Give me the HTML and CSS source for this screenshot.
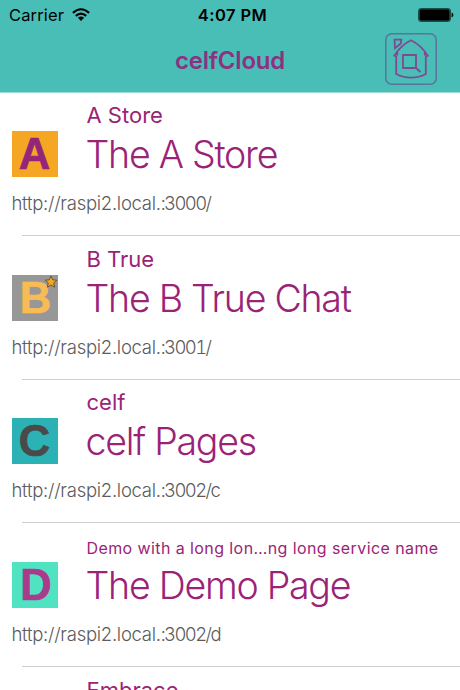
FILE: index.html
```html
<!DOCTYPE html>
<html lang="en">
<head>
<meta charset="utf-8">
<title>celfCloud</title>
<link rel="stylesheet" href="styles.css">
</head>
<body>
<div class="screen">
  <header class="header">
    <div class="status">
      <div class="carrier"><span>Carrier</span>
        <svg class="wifi" width="18" height="14" viewBox="0 0 18 14" fill="none" stroke="#000" stroke-width="2.1"><path d="M.9 4.9Q9-2.4 17.1 4.9M3.8 7.9Q9 3.2 14.2 7.9"/><path d="M5.9 9.8Q9 7.2 12.1 9.8L9 13z" fill="#000" stroke="none"/></svg>
      </div>
      <time class="clock">4:07 PM</time>
      <svg class="battery" width="36" height="14" viewBox="0 0 36 14"><rect x=".5" y=".5" width="32" height="13" rx="2.2" fill="none" stroke="#15403d" stroke-width=".9"/><rect x="1.3" y="1.3" width="30.4" height="11.4" rx="1.4"/><path d="M33.6 4.6q1.8.7 1.8 2.4t-1.8 2.4z"/></svg>
    </div>
    <nav class="navbar">
      <h1 class="heading">celfCloud</h1>
      <button class="home" aria-label="Home">
        <svg width="52" height="52" viewBox="0 0 52 52" fill="none" stroke="#804a91" stroke-width="1.8"><rect x=".8" y=".8" width="50.4" height="50.4" rx="6" stroke="#5d729c" stroke-width="1.5"/><path d="M9.3 22.7Q16 12 26 7.2Q36 12 42.8 22.7L40.8 23.5V41Q34 44.7 26 44.7T11.2 41V23.5z M12.3 22.4V18 M39.8 22.4V18M18 22h13v13H18zM31 35l4.5 4M9.5 6.7h6.8l-.5 3.8-5.8 4.7z"/></svg>
      </button>
    </nav>
  </header>
  <main class="list">
    <article class="row">
      <p class="name">A Store</p>
      <div class="tile tile-a">A</div>
      <h2 class="title">The A Store</h2>
      <p class="url">http://raspi2.local.<span class="port">:3000/</span></p>
    </article>
    <article class="row">
      <p class="name">B True</p>
      <div class="tile tile-b">B<svg class="star" width="14" height="14" viewBox="0 0 14 14"><path d="M7 1l1.7 3.8 4.2.4-3.2 2.8 1 4.2L7 10l-3.7 2.2 1-4.2L1.1 5.2l4.2-.4z" fill="#f6a624" stroke="#60512f" stroke-width=".9"/></svg></div>
      <h2 class="title">The B True Chat</h2>
      <p class="url">http://raspi2.local.<span class="port">:3001/</span></p>
    </article>
    <article class="row">
      <p class="name">celf</p>
      <div class="tile tile-c">C</div>
      <h2 class="title">celf Pages</h2>
      <p class="url">http://raspi2.local.<span class="port">:3002/c</span></p>
    </article>
    <article class="row">
      <p class="name name-long">Demo with a long lon…ng long service name</p>
      <div class="tile tile-d">D</div>
      <h2 class="title">The Demo Page</h2>
      <p class="url">http://raspi2.local.<span class="port">:3002/d</span></p>
    </article>
    <article class="row">
      <p class="name">Embrace</p>
    </article>
  </main>
</div>
</body>
</html>
```
FILE: styles.css
```css
* { box-sizing: border-box; }
body, h1, h2, p { margin: 0; font-weight: inherit; }
body { background: #fff; font-family: Inter, "Liberation Sans", sans-serif; overflow: hidden; }
.screen { width: 460px; height: 690px; overflow: hidden; }
.header { height: 93px; margin-bottom: -1px; background: #49beb7; border-bottom: 1px solid #9fdad6; }
.status {
  display: grid; grid-template-columns: 1fr auto 1fr; align-items: center;
  height: 30px; padding: 0 6px 0 9px; color: #000; font-size: 16.5px;
}
.carrier { display: flex; align-items: center; gap: 8px; letter-spacing: .15px; }
.clock { padding-left: 2px; font-weight: 600; letter-spacing: .45px; }
.battery { justify-self: end; }
.navbar { display: grid; grid-template-columns: 1fr auto 1fr; height: 62px; padding: 0 23px; align-items: center; }
.heading { grid-column: 2; font-size: 24px; line-height: 30px; font-weight: 600; color: #8e3181; letter-spacing: -.2px; }
.home { justify-self: end; width: 52px; height: 52px; margin-bottom: 4px; padding: 0; border: 0; background: none; }
.home svg { display: block; }
.row {
  position: relative; display: grid;
  grid-template-columns: 75px 1fr; grid-template-rows: 38.8px 46px 1fr;
  height: 143.75px; padding-left: 11.5px; color: #9b2377;
}
.row::after { content: ""; position: absolute; left: 22px; right: 0; bottom: 0; height: 1px; background: #cfcfd1; }
.name { grid-column: 2; font-size: 22px; line-height: 28px; padding-top: 8.9px; white-space: nowrap; }
.name-long { font-size: 16px; padding-top: 11px; letter-spacing: .41px; }
.title { margin-left: -1px; padding-top: 1px; font-size: 37.5px; line-height: 46px; font-weight: 300; white-space: nowrap; letter-spacing: -1.25px; }
.tile { position: relative; width: 46px; height: 46px; font-family: "Liberation Sans", Arial, sans-serif; font-size: 43.5px; line-height: 47px; font-weight: 700; text-align: center; -webkit-text-stroke: .7px currentColor; }
.tile-a { background: #f5a623; color: #95257a; }
.tile-b { background: #979797; color: #f8bb55; padding-left: 2px; }
.tile-c { background: #2cb2b4; color: #4a4a4a; }
.tile-d { background: #50e3c2; color: #a93a8c; padding-left: 3px; }
.star { position: absolute; top: 0; right: 0; -webkit-text-stroke: 0; }
.url { grid-column: 1 / -1; padding-top: 13px; font-size: 18.5px; line-height: 26px; font-weight: 300; color: #5c5c5c; letter-spacing: -.27px; }
.port { letter-spacing: -1.6px; font-variant-numeric: tabular-nums; }
```
